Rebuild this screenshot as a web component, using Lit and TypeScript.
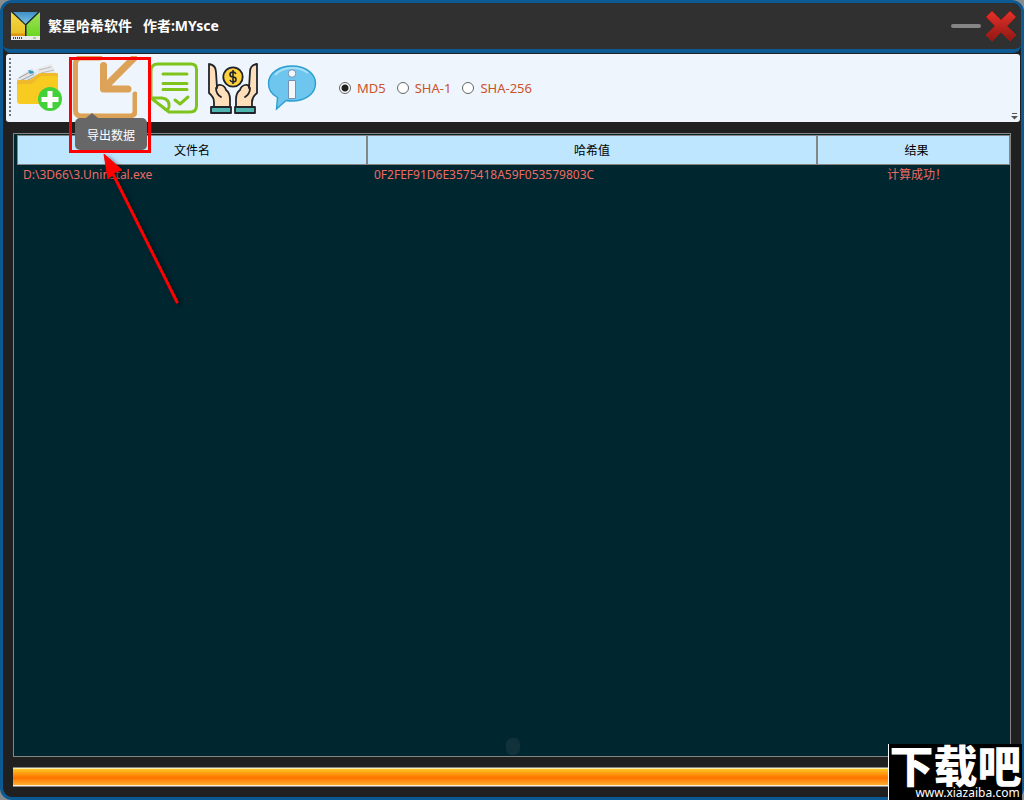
import { LitElement, html, svg, css } from "lit";
import { customElement, state } from "lit/decorators.js";

const folderIcon = svg`
  <svg class="icon" width="50" height="50" viewBox="0 0 50 50" aria-hidden="true">
    <path d="M2 16 L18 5 L27 14 L8 22Z" fill="#e4e5e6"/>
    <path d="M5 15l11-6M6 18l14-7M10 19l12-6" stroke="#9aa0a4" stroke-width="1"/>
    <path d="M22 6 L38 1 L43 14 L28 18Z" fill="#e8e8e8"/>
    <path d="M25 7l12-3M27 10l13-3" stroke="#b9bcbe" stroke-width="1"/>
    <path d="M14 7l5 1 1 2-4 1z" fill="#2e9bc4"/>
    <path d="M3 19q0-2 2-2h10q3 0 5-3l3-2q2-2 5-2h14q2 0 2 2v26q0 3-3 3H6q-3 0-3-3z" fill="#f8cb20"/>
    <path d="M5 21h11q3 0 5-3l3-3q2-2 4-2h14q2 0 2 2v-3q0-2-2-2H28q-3 0-5 2l-3 3q-2 2-5 2H5q-2 0-2 2v4q0-2 2-2z" fill="#eeb92a"/>
    <circle cx="36" cy="36" r="12" fill="#43d03a"/>
    <path d="M36 28v17M27.500 36.500h17" stroke="#fff" stroke-width="5"/>
  </svg>`;

const exportIcon = svg`
  <svg class="icon" width="64" height="64" viewBox="0 0 64 64" aria-hidden="true" fill="none" stroke="#dca257" stroke-linecap="round" stroke-linejoin="round">
    <path d="M27 2H8Q2.500 2 2.500 8v46q0 6 5.500 6h49q5 0 5-5V38" stroke-width="5"/>
    <path d="M61 2L32 31M30.500 9.500v23.500H55" stroke-width="7"/>
  </svg>`;

const reportIcon = svg`
  <svg class="icon" width="50" height="52" viewBox="0 0 50 52" aria-hidden="true" fill="none" stroke="#7fc41c" stroke-width="3" stroke-linecap="round" stroke-linejoin="round">
    <path d="M2 35V9q0-7 7-7h33q5.500 0 5.500 5.500v36q0 6.500-6.500 6.500H20L2 36"/>
    <path d="M2 36h11q8 1 7 9-1 4-4 2"/>
    <path d="M14 12h24M14 21.500h24M14 27.500h24M26 38l5 4 8-7"/>
  </svg>`;

const donateIcon = svg`
  <svg class="icon" width="50" height="52" viewBox="0 0 50 52" aria-hidden="true">
    <g stroke="#20242a" stroke-width="1.800" stroke-linejoin="round" stroke-linecap="round">
      <path d="M1 2q7 1 7 8l1 16q0-4 4-3 4 1 5 5 4 3 4 9v8H6v-5q0-5-5-9z" fill="#ffdfba"/>
      <path d="M8 26q0 6 5 9" fill="none"/>
      <path d="M3 45h20v6H3z" fill="#4fb4ae"/>
      <path d="M49 2q-7 1-7 8l-1 16q0-4-4-3-4 1-5 5-4 3-4 9v8h16v-5q0-5 5-9z" fill="#ffdfba"/>
      <path d="M42 26q0 6-5 9" fill="none"/>
      <path d="M27 45h20v6H27z" fill="#4fb4ae"/>
    </g>
    <circle cx="25" cy="15" r="9.700" fill="#ffd13c" stroke="#20242a" stroke-width="1.800"/>
    <path d="M28 12q-1-2-3-2-3 0-3 2.500t3 2.500 3 2.500-3 2.500q-2 0-3-2M25 8v14" fill="none" stroke="#20242a" stroke-width="1.600"/>
  </svg>`;

const infoIcon = svg`
  <svg class="icon" width="50" height="48" viewBox="0 0 50 48" aria-hidden="true">
    <path d="M25 2C12 2 1.500 9 1.500 19.500c0 6 3.500 11 9 14L9.500 45 19 36.500q3 .5 6 .5c13 0 23.500-7 23.500-17.500S38 2 25 2z" fill="#6ec6ee" stroke="#2b9fd2" stroke-width="1.400"/>
    <path d="M8 11q6-7 17-7 10 0 16 5" fill="none" stroke="#a6dff7" stroke-width="2"/>
    <circle cx="25" cy="9.500" r="3.800" fill="#f4f6fa" stroke="#7490b4" stroke-width="1"/>
    <path d="M21.500 16.500h7v18h-7z" fill="#f4f6fa" stroke="#7490b4" stroke-width="1"/>
  </svg>`;

const logoIcon = svg`
  <svg class="logo" width="30" height="30" viewBox="0 0 30 30" aria-hidden="true">
    <defs>
      <linearGradient id="ly" x1="0" y1="0" x2="0" y2="1"><stop offset="0" stop-color="#f1dc4a"/><stop offset="1" stop-color="#e9bd20"/></linearGradient>
      <linearGradient id="lb" x1="0" y1="0" x2="0" y2="1"><stop offset="0" stop-color="#3f91c8"/><stop offset="1" stop-color="#7cc2e4"/></linearGradient>
      <linearGradient id="lg" x1="0" y1="0" x2="0" y2="1"><stop offset="0" stop-color="#a4e05c"/><stop offset="1" stop-color="#6bd722"/></linearGradient>
    </defs>
    <path d="M0 1h29v24H0z" fill="#1d2424"/>
    <path d="M0 1l14 13v11H0z" fill="url(#ly)"/>
    <path d="M2 1h25L14.500 13z" fill="url(#lb)"/>
    <path d="M29 1v24H15.500V14z" fill="url(#lg)"/>
    <path d="M0 22.500h14V25H0z" fill="#dd9411"/>
    <path d="M0 25h29v4H0z" fill="#e8eaea"/>
    <path d="M2 27h10" stroke="#444" stroke-width="2" stroke-dasharray="1 1"/>
    <path d="M22 27h3" stroke="#62b536"/>
  </svg>`;

@customElement("app-root")
export class AppRoot extends LitElement {
  @state() private algorithm = "MD5";

  private algorithms = ["MD5", "SHA-1", "SHA-256"];
  private rows = [
    { file: "D:\\3D66\\3.Uninstal.exe", hash: "0F2FEF91D6E3575418A59F053579803C", result: "计算成功！" },
  ];

  static styles = css`
    :host {
      display: block;
      position: relative;
      height: 100vh;
      background: #8a8d90;
      font: 12px/16px "Noto Sans", "Noto Sans CJK SC", sans-serif;
    }
    * { box-sizing: border-box; }
    button { border: 0; padding: 0; background: none; font: inherit; cursor: pointer; }
    svg { display: block; }
    .window {
      position: relative;
      display: flex;
      flex-direction: column;
      height: 100%;
      border: 3px solid #0d5a92;
      border-radius: 12px;
      background: #202020;
      overflow: hidden;
    }
    .titlebar {
      display: flex;
      align-items: center;
      flex: none;
      height: 50px;
      padding: 0 4px 0 8px;
      border-bottom: 4px solid #0d5a92;
      border-radius: 8px;
      background: #303030;
    }
    .title {
      margin: 0 0 0 7px;
      flex: 1;
      font-size: 14px;
      line-height: 18px;
      font-weight: 700;
      color: #fff;
      white-space: pre;
    }
    .controls { display: flex; align-items: center; gap: 4px; }
    .toolbar {
      position: relative;
      display: flex;
      align-items: center;
      flex: none;
      height: 68px;
      margin: 1px 1px 0 3px;
      padding-left: 3px;
      border-radius: 3px;
      background: #eef5fd;
    }
    .grip { width: 2px; height: 60px; margin-right: 3px; background: repeating-linear-gradient(#70757a 0 2px, transparent 2px 4px); }
    .tools { display: flex; align-items: center; gap: 9px; }
    .wide { margin-right: 3px; }
    .algorithms {
      display: flex;
      gap: 11px;
      margin: 0 0 0 22px;
      padding: 0;
      border: 0;
      font-size: 13px;
      color: #cb5229;
    }
    .choice { display: flex; align-items: center; gap: 6px; }
    .radio {
      appearance: none;
      width: 12px;
      height: 12px;
      margin: 0;
      border: 1px solid #666;
      border-radius: 50%;
      background: #fff;
    }
    .radio:checked { background: radial-gradient(circle, #202020 0 3px, #fff 4px); }
    .overflow { position: absolute; right: 2px; bottom: 2px; }
    .panel {
      position: relative;
      flex: 1;
      min-height: 0;
      margin: 11px 10px 0;
      padding: 1px 0 0 3px;
      border: 1px solid #858585;
      background: #002630;
    }
    .table { width: 100%; table-layout: fixed; border-collapse: separate; border-spacing: 0; color: #ed6b62; }
    .head {
      height: 30px;
      padding: 2px 0 0;
      border: solid #858585;
      border-width: 1px 2px 1px 0;
      background: #bfe6ff;
      color: #000;
      font-weight: 400;
    }
    .head:first-child { border-left-width: 1px; }
    .head:last-child { border-right-width: 1px; padding-left: 6px; }
    .col-file { width: 351px; }
    .col-hash { width: 450px; }
    .cell { height: 20px; padding: 0 6px; }
    .cell-result { padding-right: 0; text-align: center; }
    .thumb { position: absolute; left: 50%; bottom: 1px; width: 14px; height: 17px; margin-left: -6px; border-radius: 6px; background: #12323b; }
    .progress {
      flex: none;
      height: 20px;
      margin: 10px 10px;
      border: solid #858585;
      border-width: 1px 0;
      background: linear-gradient(#fff0b0 0 1px, #ffc726 1px, #ff8a08 40%, #ff7300 56%, #ff9014 72%, #ffac30 17px, #fff0d0 17px);
    }
    .tooltip {
      position: absolute;
      left: 72px;
      top: 115px;
      padding: 10px 12px 6px;
      border-radius: 5px;
      background: #676767;
      color: #fff;
    }
    .tooltip::before {
      content: "";
      position: absolute;
      left: 11px;
      top: -5px;
      border: solid transparent;
      border-width: 0 6px 5px;
      border-bottom-color: #676767;
    }
    .callout { position: absolute; left: 66px; top: 54px; width: 82px; height: 96px; border: 3px solid #f00; pointer-events: none; }
    .arrow { position: absolute; left: 96px; top: 147px; pointer-events: none; filter: drop-shadow(3px 2px 2px rgba(0, 0, 0, 0.5)); }
    .watermark {
      position: absolute;
      right: 2px;
      bottom: 0;
      width: 134px;
      height: 56px;
      border-left: 1px solid #fff;
      background: #000;
      color: #fff;
      text-align: center;
    }
    .brand { display: block; font: 900 44px/40px "Noto Sans CJK SC", sans-serif; white-space: nowrap; }
    .site { display: block; padding-left: 24px; line-height: 18px; }
  `;

  render() {
    return html`
      <main class="window">
        <header class="titlebar">
          ${logoIcon}
          <h1 class="title">繁星哈希软件   作者:MYsce</h1>
          <div class="controls">
            <button aria-label="最小化">
              <svg width="30" height="32" viewBox="0 0 30 32"><rect y="14" width="30" height="4" rx="2" fill="#858585"/></svg>
            </button>
            <button aria-label="关闭">
              <svg width="32" height="32" viewBox="0 0 32 32">
                <defs><linearGradient id="x" x1="0" y1="0" x2="0" y2="1"><stop offset="0" stop-color="#e5322a"/><stop offset="1" stop-color="#8f1713"/></linearGradient></defs>
                <path d="M7 1l9 9 9-9 6 6-9 9 9 9-6 6-9-9-9 9-6-6 9-9-9-9z" fill="url(#x)" stroke="#a41c17" stroke-linejoin="round"/>
              </svg>
            </button>
          </div>
        </header>

        <div class="toolbar">
          <span class="grip"></span>
          <div class="tools">
            <button class="tool" aria-label="添加文件">${folderIcon}</button>
            <button class="tool wide" aria-label="导出数据" aria-describedby="tip">${exportIcon}</button>
            <button class="tool" aria-label="报告">${reportIcon}</button>
            <button class="tool" aria-label="捐赠">${donateIcon}</button>
            <button class="tool" aria-label="关于">${infoIcon}</button>
          </div>
          <fieldset class="algorithms" aria-label="算法">
            ${this.algorithms.map(
              (name) => html`
                <label class="choice">
                  <input class="radio" type="radio" name="algorithm" .value=${name}
                    .checked=${this.algorithm === name} @change=${() => (this.algorithm = name)} />
                  ${name}
                </label>`
            )}
          </fieldset>
          <svg class="overflow" width="7" height="7" viewBox="0 0 7 7" aria-hidden="true">
            <path d="M1 .5h5" stroke="#555"/><path d="M0 3h7L3.500 6.500z" fill="#555"/>
          </svg>
        </div>

        <section class="panel">
          <table class="table">
            <thead>
              <tr>
                <th class="head col-file" scope="col">文件名</th>
                <th class="head col-hash" scope="col">哈希值</th>
                <th class="head" scope="col">结果</th>
              </tr>
            </thead>
            <tbody>
              ${this.rows.map(
                (row) => html`
                  <tr>
                    <td class="cell">${row.file}</td>
                    <td class="cell">${row.hash}</td>
                    <td class="cell cell-result">${row.result}</td>
                  </tr>`
              )}
            </tbody>
          </table>
          <span class="thumb"></span>
        </section>

        <div class="progress" role="progressbar" aria-valuenow="100" aria-label="进度"></div>

        <div class="tooltip" id="tip" role="tooltip">导出数据</div>
        <div class="callout"></div>
        <svg class="arrow" width="90" height="160" viewBox="0 0 90 160" aria-hidden="true">
          <path d="M14 24L78 152" stroke="#f00" stroke-width="3" stroke-linecap="round"/>
          <path d="M5 4L23 20L16 22L9 29Z" fill="#f00" stroke="#f00"/>
        </svg>
      </main>
      <aside class="watermark">
        <span class="brand">下载吧</span>
        <span class="site">www.xiazaiba.com</span>
      </aside>
    `;
  }
}
